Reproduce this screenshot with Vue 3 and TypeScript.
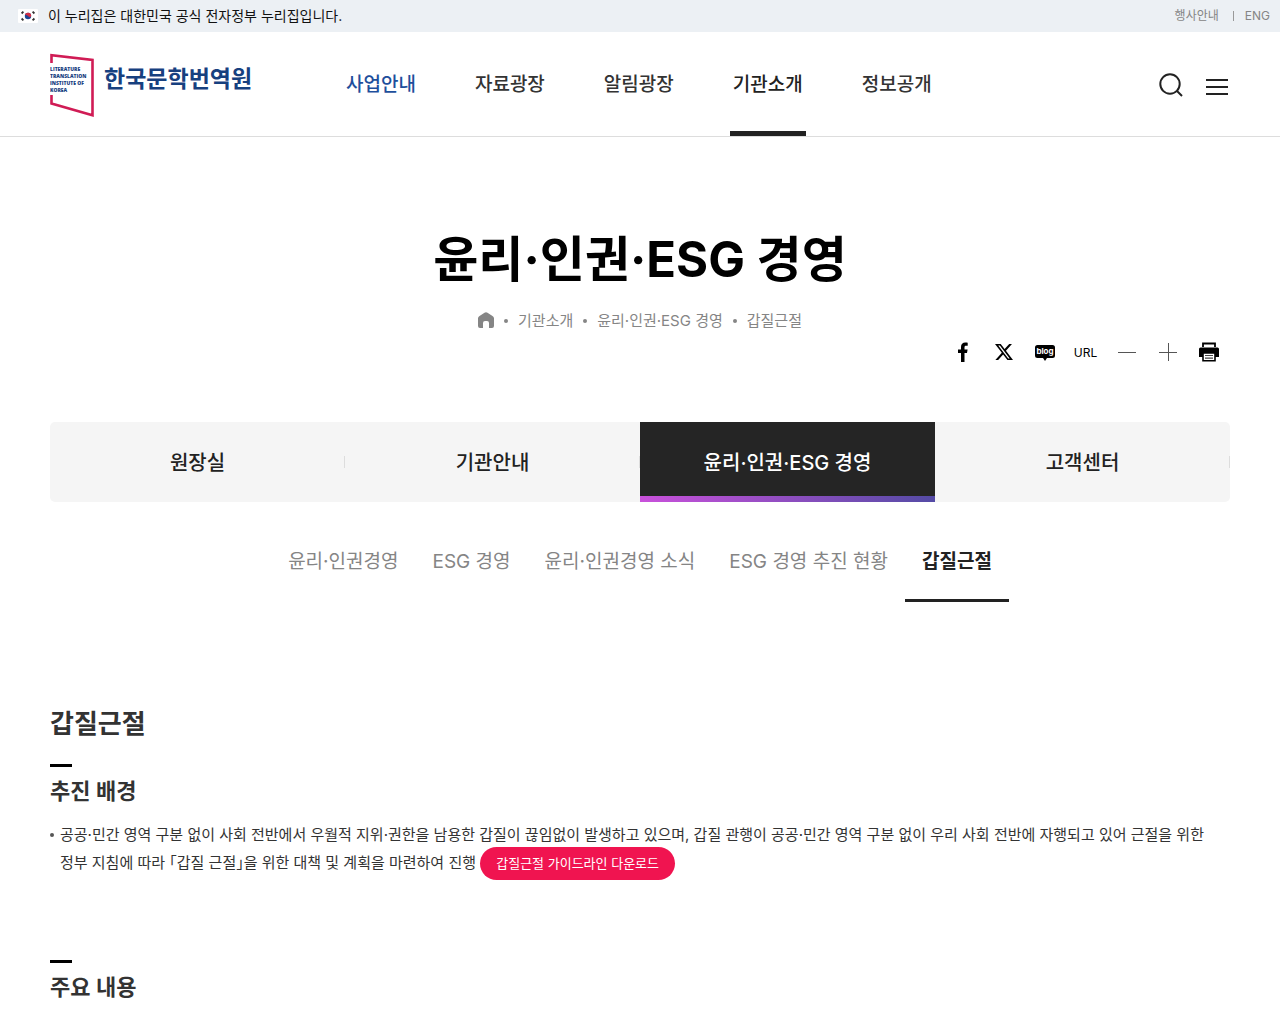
<script setup lang="ts">
interface NavItem {
  label: string
  state?: 'hover' | 'current'
}

const mainNav: NavItem[] = [
  { label: '사업안내', state: 'hover' },
  { label: '자료광장' },
  { label: '알림광장' },
  { label: '기관소개', state: 'current' },
  { label: '정보공개' },
]

const crumbs: string[] = ['기관소개', '윤리·인권·ESG 경영', '갑질근절']

const tabs: NavItem[] = [
  { label: '원장실' },
  { label: '기관안내' },
  { label: '윤리·인권·ESG 경영', state: 'current' },
  { label: '고객센터' },
]

const subTabs: NavItem[] = [
  { label: '윤리·인권경영' },
  { label: 'ESG 경영' },
  { label: '윤리·인권경영 소식' },
  { label: 'ESG 경영 추진 현황' },
  { label: '갑질근절', state: 'current' },
]
</script>

<template>
  <div class="page">
    <div class="gov">
      <p class="gov-note">
        <svg class="flag" width="20" height="14" viewBox="0 0 20 14" aria-hidden="true">
          <rect width="20" height="14" rx="1" fill="#fff" />
          <circle cx="10" cy="7" r="3.2" fill="#1d4795" />
          <path d="M6.9 6.2a3.2 3.2 0 0 1 6.3.9c-.5 1.500-2.300 1.300-3.200 0-.9-1.100-2.500-1.300-3.100-.9z" fill="#d22f45" />
          <path d="M3.600 4.500 5.400 2.700M14.600 2.700l1.800 1.800M3.600 9.500l1.800 1.800M14.600 11.300l1.800-1.800" stroke="#333" stroke-width="1.800" />
        </svg>
        이 누리집은 대한민국 공식 전자정부 누리집입니다.
      </p>
      <div class="gov-links">
        <a href="#">행사안내</a>
        <a href="#" class="lang">ENG</a>
      </div>
    </div>

    <header class="header">
      <a href="#" class="logo" aria-label="한국문학번역원">
        <svg width="44" height="65" viewBox="0 0 44 65" aria-hidden="true">
          <path d="M1.500 10V2.200L42.500 7v55.200L1.500 50.500V42" fill="none" stroke="#d01c55" stroke-width="2.600" />
          <g class="logo-small">
            <text x="0" y="18">LITERATURE</text>
            <text x="0" y="25">TRANSLATION</text>
            <text x="0" y="32">INSTITUTE OF</text>
            <text x="0" y="39">KOREA</text>
          </g>
        </svg>
        <span class="logo-name">한국문학번역원</span>
      </a>
      <nav class="main-nav">
        <a v-for="item in mainNav" :key="item.label" href="#" :class="item.state">{{ item.label }}</a>
      </nav>
      <div class="tools">
        <button type="button" aria-label="검색">
          <svg width="26" height="26" viewBox="0 0 26 26" fill="none" stroke="#222" stroke-width="2">
            <circle cx="12" cy="12" r="9.700" />
            <path d="m19 19 5 5" />
          </svg>
        </button>
        <button type="button" aria-label="전체메뉴">
          <svg width="22" height="26" viewBox="0 0 22 26" stroke="#222" stroke-width="2">
            <path d="M0 8h22M0 15h22M0 22h22" />
          </svg>
        </button>
      </div>
    </header>

    <main class="content">
      <h1>윤리·인권·ESG 경영</h1>
      <nav class="crumbs">
        <a href="#" class="home" aria-label="홈">
          <svg width="16" height="16" viewBox="0 0 16 16">
            <path d="M6.500.7a3 3 0 0 1 3 0l5 3.200A3 3 0 0 1 16 6.300V14a2 2 0 0 1-2 2h-3v-5a2 2 0 0 0-2-2H7a2 2 0 0 0-2 2v5H2a2 2 0 0 1-2-2V6.300a3 3 0 0 1 1.500-2.400z" fill="#858585" />
          </svg>
        </a>
        <a v-for="crumb in crumbs" :key="crumb" href="#" class="crumb">{{ crumb }}</a>
      </nav>

      <div class="share">
        <button type="button" aria-label="페이스북">
          <svg width="20" height="20" viewBox="0 0 20 20">
            <path d="M8 20v-9H5V7.500h3V5c0-3 1.700-4.500 4.300-4.500.9 0 1.900.1 2.400.2v3h-1.600c-1.300 0-1.600.7-1.600 1.600v2.200h3.100L14 11h-2.500v9z" />
          </svg>
        </button>
        <button type="button" aria-label="엑스">
          <svg width="18" height="18" viewBox="0 0 24 24">
            <path d="M18.900 1.200h3.700l-8 9.100L24 22.800h-7.400l-5.800-7.500-6.600 7.500H.5l8.600-9.800L0 1.200h7.600l5.200 6.900zM17.600 20.600h2L6.500 3.200H4.300z" />
          </svg>
        </button>
        <button type="button" aria-label="블로그">
          <svg width="20" height="17" viewBox="0 0 20 17">
            <path d="M2.500 1h15A2.500 2.500 0 0 1 20 3.500v8a2.500 2.500 0 0 1-2.500 2.500H12l-2 3-2-3H2.500A2.500 2.500 0 0 1 0 11.500v-8A2.500 2.500 0 0 1 2.500 1z" />
            <text x="10" y="10" class="blog-text">blog</text>
          </svg>
        </button>
        <button type="button" class="url">URL</button>
        <button type="button" aria-label="축소">
          <svg width="18" height="18" viewBox="0 0 18 18" stroke="#555"><path d="M0 9.500h18" /></svg>
        </button>
        <button type="button" aria-label="확대">
          <svg width="18" height="18" viewBox="0 0 18 18" stroke="#555"><path d="M0 9.500h18M9.500 0v18" /></svg>
        </button>
        <button type="button" aria-label="인쇄">
          <svg width="20" height="20" viewBox="0 0 20 20">
            <path d="M4 5V1.500h12V5" fill="none" stroke="#000" stroke-width="1.800" />
            <path d="M1.500 5.500h17A1.500 1.500 0 0 1 20 7v8h-4v-4H4v4H0V7a1.500 1.500 0 0 1 1.500-1.500z" />
            <path d="M4 11h12v7.800H4z" fill="#fff" stroke="#000" stroke-width="1.600" />
            <path d="M6 13.500h8M6 16.200h8" stroke="#444" stroke-width="1.200" />
          </svg>
        </button>
      </div>

      <nav class="tabs">
        <a v-for="tab in tabs" :key="tab.label" href="#" :class="tab.state">{{ tab.label }}</a>
      </nav>
      <nav class="sub-tabs">
        <a v-for="tab in subTabs" :key="tab.label" href="#" :class="tab.state">{{ tab.label }}</a>
      </nav>

      <h2>갑질근절</h2>
      <section>
        <h3>추진 배경</h3>
        <ul>
          <li>
            공공·민간 영역 구분 없이 사회 전반에서 우월적 지위·권한을 남용한 갑질이 끊임없이 발생하고 있으며, 갑질 관행이 공공·민간 영역 구분 없이 우리 사회 전반에 자행되고 있어 근절을 위한 정부 지침에 따라 ｢갑질 근절｣을 위한 대책 및 계획을 마련하여 진행
            <a href="#" class="download">갑질근절 가이드라인 다운로드</a>
          </li>
        </ul>
      </section>
      <section>
        <h3>주요 내용</h3>
      </section>
    </main>
  </div>
</template>

<style>
body {
  margin: 0;
  background: #fff;
}
</style>

<style scoped>
.page {
  font-family: Inter, "Noto Sans CJK KR", sans-serif;
  color: #333;
  word-break: keep-all;
}
a {
  color: inherit;
  text-decoration: none;
}
button {
  padding: 0;
  border: 0;
  background: none;
  font: inherit;
  color: #000;
  display: flex;
  align-items: center;
  justify-content: center;
}
svg {
  display: block;
}
h1, h2, h3, p, ul {
  margin: 0;
  padding: 0;
}

.gov {
  height: 32px;
  padding: 0 10px 0 18px;
  background: #ecf0f4;
  display: flex;
  align-items: center;
  justify-content: space-between;
}
.gov-note {
  display: flex;
  align-items: center;
  gap: 10px;
  font-size: 14px;
  line-height: 20px;
  color: #111;
}
.gov-links {
  display: flex;
  align-items: center;
  font-size: 12px;
  line-height: 20px;
  color: #858585;
}
.lang {
  display: flex;
  align-items: center;
}
.lang::before {
  content: "";
  width: 1px;
  height: 10px;
  margin: 0 11px 0 14px;
  background: #999;
}

.header {
  height: 104px;
  padding: 0 50px;
  border-bottom: 1px solid #ddd;
  display: flex;
}
.logo {
  display: flex;
  align-items: center;
  gap: 10px;
  width: 293px;
  padding-top: 2px;
}
.logo-small {
  font: 800 5px "Open Sans", sans-serif;
  fill: #17407f;
}
.logo-name {
  padding-bottom: 12px;
  font-size: 23px;
  line-height: 30px;
  font-weight: 700;
  color: #17407f;
}
.main-nav {
  display: flex;
  gap: 53px;
}
.main-nav a {
  box-sizing: border-box;
  height: 104px;
  padding: 0 3px;
  border-bottom: 5px solid transparent;
  font-size: 19px;
  line-height: 106px;
  font-weight: 500;
}
.main-nav .hover {
  color: #1e4f9c;
}
.main-nav .current {
  color: #222;
  border-color: #222;
}
.tools {
  margin-left: auto;
  padding: 2px 2px 0 0;
  display: flex;
  align-items: center;
  gap: 22px;
}

.content {
  padding: 0 50px;
}
h1 {
  padding-top: 88px;
  font-size: 49px;
  line-height: 70px;
  font-weight: 700;
  text-align: center;
  color: #000;
}
.crumbs {
  margin-top: 15px;
  display: flex;
  align-items: center;
  justify-content: center;
  font-size: 15px;
  line-height: 22px;
  color: #858585;
}
.home {
  padding-bottom: 3px;
}
.crumb {
  display: flex;
  align-items: center;
}
.crumb::before {
  content: "";
  width: 4px;
  height: 4px;
  margin: 0 10px;
  border-radius: 50%;
  background: #858585;
}
.share {
  display: flex;
  justify-content: flex-end;
  padding-right: 1px;
}
.share button {
  width: 41px;
  height: 40px;
}
.share .url {
  font-size: 12px;
}
.blog-text {
  font: 700 8px Inter, sans-serif;
  fill: #fff;
  text-anchor: middle;
}

.tabs {
  margin-top: 50px;
  display: flex;
  border-radius: 5px;
  background: #f5f5f5;
  overflow: hidden;
}
.tabs a {
  box-sizing: border-box;
  flex: 1;
  height: 80px;
  padding-bottom: 2px;
  display: flex;
  align-items: center;
  justify-content: center;
  font-size: 20px;
  font-weight: 500;
  color: #222;
  background: linear-gradient(#ddd, #ddd) right center / 1px 12px no-repeat;
}
.tabs .current {
  color: #fff;
  background: linear-gradient(90deg, #c951db, #544ba5) bottom / 100% 6px no-repeat #252525;
}
.sub-tabs {
  margin-top: 23px;
  display: flex;
  justify-content: center;
}
.sub-tabs a {
  padding: 0 17px;
  border-bottom: 3px solid transparent;
  font-size: 19px;
  line-height: 74px;
  color: #858585;
}
.sub-tabs .current {
  color: #222;
  border-color: #222;
  font-weight: 600;
}

h2 {
  margin-top: 102px;
  font-size: 26px;
  line-height: 40px;
  font-weight: 600;
}
section {
  margin-top: 80px;
}
h2 + section {
  margin-top: 20px;
}
h3 {
  font-size: 22px;
  line-height: 32px;
  font-weight: 600;
}
h3::before {
  content: "";
  display: block;
  width: 22px;
  height: 3px;
  margin-bottom: 8px;
  background: #000;
}
ul {
  margin-top: 14px;
  list-style: none;
}
li {
  position: relative;
  padding-left: 10px;
  font-size: 15px;
  line-height: 28px;
}
li::before {
  content: "";
  position: absolute;
  left: 0;
  top: 12px;
  width: 4px;
  height: 4px;
  border-radius: 50%;
  background: #555;
}
.download {
  display: inline-block;
  margin: -2px 0 0;
  padding: 0 16px;
  border-radius: 17px;
  background: #f01450;
  font-size: 13px;
  line-height: 33px;
  color: #fff;
}
</style>
